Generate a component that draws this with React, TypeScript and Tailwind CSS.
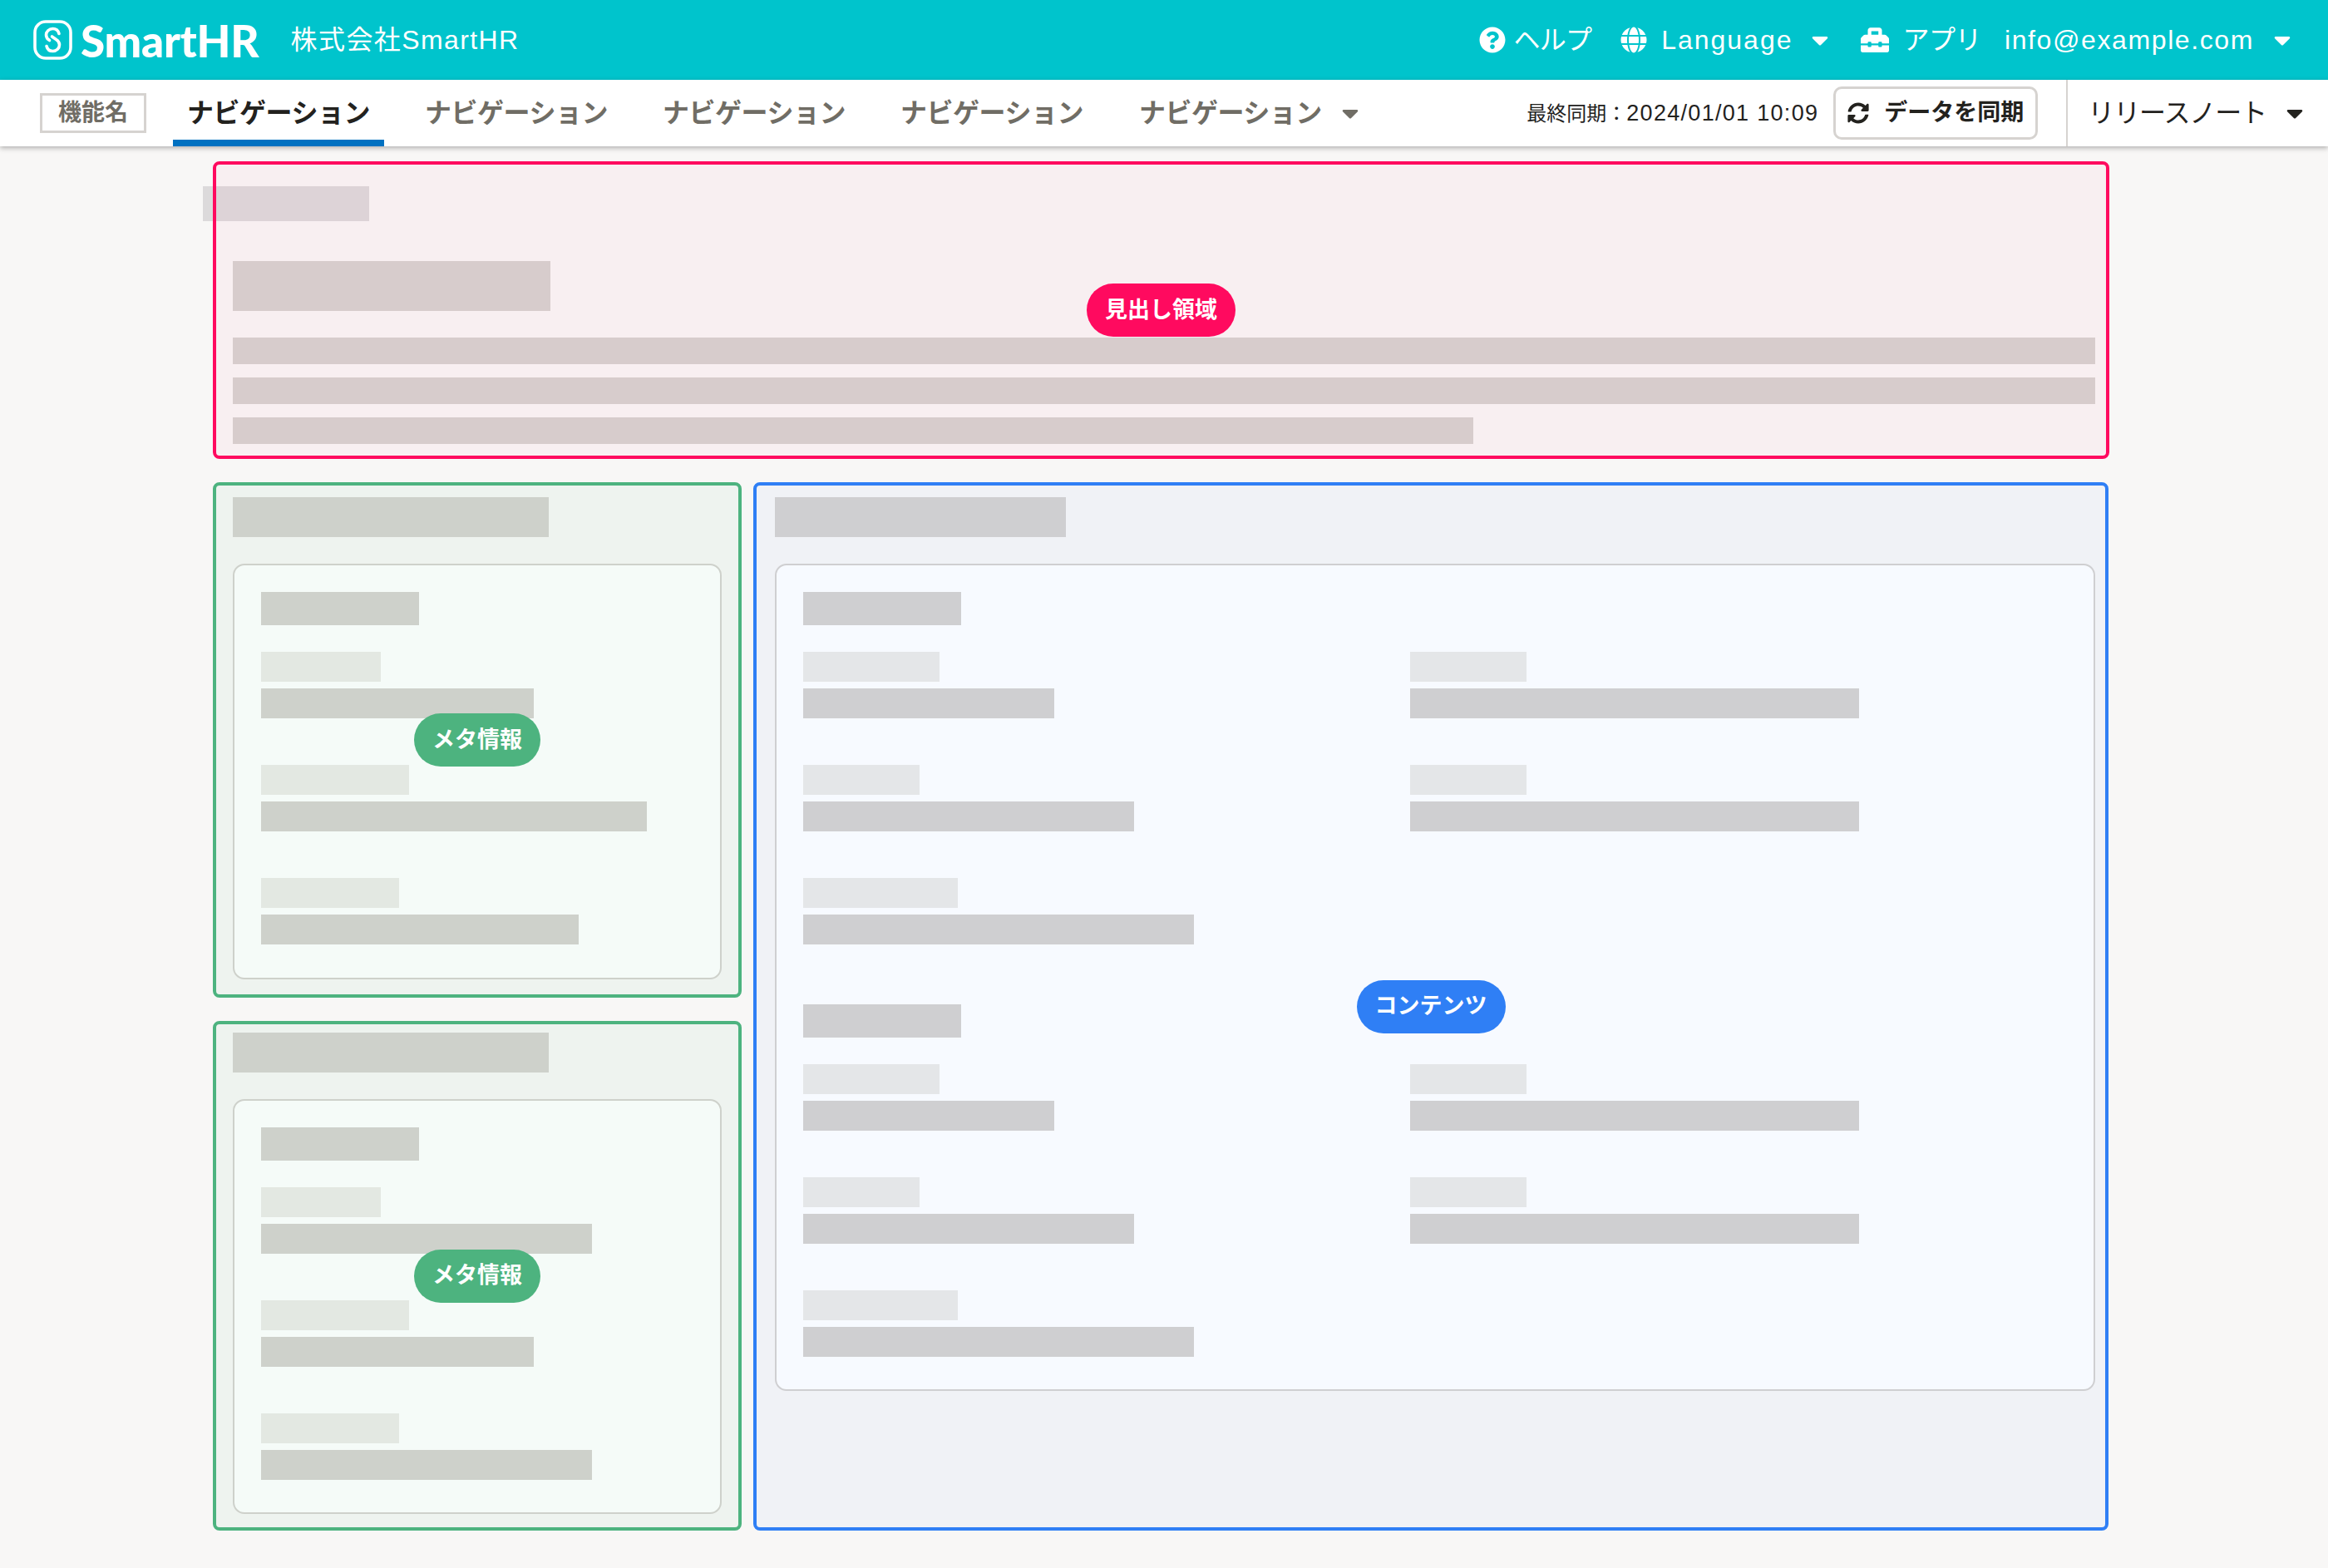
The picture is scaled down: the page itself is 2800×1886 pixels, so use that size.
import { FaCaretDown, FaGlobe, FaQuestionCircle, FaSyncAlt, FaToolbox } from "react-icons/fa";

const jp = { fontFamily: '"Liberation Sans", "Noto Sans CJK JP", sans-serif' };

const Bar = ({ w, h = 36, light = false }: { w: number; h?: number; light?: boolean }) => (
  <div className={light ? "bg-[#ecebe8]" : "bg-[#d6d3d0]"} style={{ width: w, height: h }} />
);

// label + value placeholder pair
const Field = ({ label, value }: { label: number; value: number }) => (
  <div className="flex flex-col gap-2">
    <Bar w={label} light />
    <Bar w={value} />
  </div>
);

const Overlay = ({ box, pill, text }: { box: string; pill: string; text: string }) => (
  <div className={`absolute inset-0 flex items-center justify-center rounded-lg border-4 ${box}`}>
    <span className={`flex h-16 items-center rounded-full px-[22px] text-[27px] font-bold text-white ${pill}`}>
      {text}
    </span>
  </div>
);

const Caret = ({ className }: { className: string }) => <FaCaretDown className={`h-8 w-5 shrink-0 ${className}`} />;

const Logo = () => (
  <svg viewBox="0 0 47 48" className="h-12 w-[47px] shrink-0" fill="none" stroke="white">
    <rect x="2" y="2" width="43" height="44" rx="13" strokeWidth="3.6" />
    <path d="M31 16.5C30 12.5 27 10.5 23.5 10.5 19 10.5 15.5 14 15.5 18 15.5 21 17 23 19.5 24.5" strokeWidth="3.6" strokeLinecap="round" />
    <path d="M16 31.5C17 35.5 20 37.5 23.5 37.5 28 37.5 31.5 34 31.5 30 31.5 27 30 25 27.5 23.5L22.5 20" strokeWidth="3.6" strokeLinecap="round" />
  </svg>
);

const MetaBox = ({
  top,
  bottom,
  height,
  rows,
}: {
  top: number;
  bottom: number;
  height: number;
  rows: [number, number][];
}) => (
  <section className="relative flex w-[636px] flex-col gap-8 px-6" style={{ paddingTop: top, paddingBottom: bottom }}>
    <Bar w={380} h={48} />
    <div
      className="flex flex-col gap-8 rounded-[14px] border-2 border-[#d6d3d0] bg-white pt-8 pl-8"
      style={{ height }}
    >
      <Bar w={190} h={40} />
      <div className="flex flex-col gap-14">
        {rows.map(([l, v], i) => (
          <Field key={i} label={l} value={v} />
        ))}
      </div>
    </div>
    <Overlay box="border-[#4db37f] bg-[#4db37f]/[0.055]" pill="bg-[#4db37f]" text="メタ情報" />
  </section>
);

const ContentGroup = ({ rows }: { rows: [number, number, number?, number?][] }) => (
  <div className="flex flex-col gap-8">
    <Bar w={190} h={40} />
    <div className="flex flex-col gap-14">
      {rows.map(([l, v, l2, v2], i) => (
        <div key={i} className="grid grid-cols-[730px_1fr]">
          <Field label={l} value={v} />
          {l2 && v2 ? <Field label={l2} value={v2} /> : null}
        </div>
      ))}
    </div>
  </div>
);

const groupRows: [number, number, number?, number?][] = [
  [164, 302, 140, 540],
  [140, 398, 140, 540],
  [186, 470],
];

export default function App() {
  return (
    <div className="min-h-[1886px] bg-[#f8f7f6]" style={jp}>
      {/* Header */}
      <header className="flex h-24 items-center bg-[#00c4cc] pr-[45px] pl-10 text-[32px] text-white">
        <Logo />
        <span className="ml-[10px] font-['Lato'] text-[53px] leading-none font-black tracking-[-0.2px]">SmartHR</span>
        <span className="ml-[38px] tracking-[1.4px]">株式会社SmartHR</span>
        <div className="ml-auto flex items-center">
          <FaQuestionCircle className="size-8" />
          <span className="ml-[10px] tracking-[-0.8px]">ヘルプ</span>
          <FaGlobe className="ml-[35px] size-8" />
          <span className="ml-[17px] tracking-[2px]">Language</span>
          <Caret className="ml-[22px]" />
          <FaToolbox className="ml-[39px] size-[34px]" />
          <span className="ml-[17px] tracking-[-0.5px]">アプリ</span>
          <span className="ml-7 tracking-[1.6px]">info@example.com</span>
          <Caret className="ml-6" />
        </div>
      </header>

      {/* Nav */}
      <nav className="relative z-10 flex h-20 items-center bg-white pl-12 shadow-[0_2px_6px_rgba(0,0,0,0.3)]">
        <span className="flex h-12 w-32 items-center justify-center border-[3px] border-[#d6d3d0] text-[28px] font-bold text-[#706d65]">
          機能名
        </span>
        <div className="ml-8 flex h-full gap-8">
          <a className="flex h-full w-[254px] items-center justify-center border-b-8 border-[#0071c1] pt-2 text-[32px] font-bold tracking-[-0.5px] text-[#23221e]">
            ナビゲーション
          </a>
          {["a", "b", "c"].map((k) => (
            <a key={k} className="flex h-full w-[254px] items-center justify-center text-[32px] font-bold tracking-[-0.5px] text-[#706d65]">
              ナビゲーション
            </a>
          ))}
          <a className="flex h-full items-center pl-[18px] text-[32px] font-bold tracking-[-0.5px] text-[#706d65]">
            ナビゲーション
            <Caret className="ml-6 text-[#706d65]" />
          </a>
        </div>
        <span className="ml-auto text-[24px] text-[#23221e]">
          最終同期：<span className="text-[27px] tracking-[1.3px]">2024/01/01 10:09</span>
        </span>
        <button className="ml-[18px] flex h-16 w-[246px] items-center justify-center gap-[18px] rounded-[10px] border-[3px] border-[#d6d3d0] text-[28px] font-bold text-[#23221e]">
          <FaSyncAlt className="size-[26px]" />
          データを同期
        </button>
        <div className="ml-[34px] flex h-full items-center border-l-2 border-[#d6d3d0] pr-[30px] pl-6 text-[32px] tracking-[-1.1px] text-[#23221e]">
          リリースノート
          <Caret className="ml-6 text-[#23221e]" />
        </div>
      </nav>

      {/* Main */}
      <main className="flex w-[2537px] flex-col gap-7 pt-[18px] pl-64">
        <section className="relative flex h-[358px] flex-col pt-[30px] pr-[17px] pl-6">
          <div className="-ml-9 h-[42px] w-[200px] bg-[#dcdadb]" />
          <div className="mt-12 h-[60px] w-[382px] bg-[#d6d3d0]" />
          <div className="mt-8 flex flex-col gap-4">
            <div className="h-8 bg-[#d6d3d0]" />
            <div className="h-8 bg-[#d6d3d0]" />
            <div className="h-8 w-[1492px] bg-[#d6d3d0]" />
          </div>
          <Overlay box="border-[#ff0a5f] bg-[#ff0a5f]/[0.03]" pill="bg-[#ff0a5f]" text="見出し領域" />
        </section>

        <div className="flex gap-[14px]">
          <div className="flex flex-col gap-7">
            <MetaBox
              top={18}
              bottom={22}
              height={500}
              rows={[
                [144, 328],
                [178, 464],
                [166, 382],
              ]}
            />
            <MetaBox
              top={14}
              bottom={20}
              height={499}
              rows={[
                [144, 398],
                [178, 328],
                [166, 398],
              ]}
            />
          </div>

          <section className="relative flex w-[1630px] flex-col gap-8 pt-[18px] pr-4 pl-[26px]">
            <Bar w={350} h={48} />
            <div className="flex h-[995px] flex-col gap-[72px] rounded-[14px] border-2 border-[#d6d3d0] bg-white pt-8 pl-8">
              <ContentGroup rows={groupRows} />
              <ContentGroup rows={groupRows} />
            </div>
            <Overlay box="border-[#2f7ff5] bg-[#2f7ff5]/[0.04]" pill="bg-[#2f7ff5]" text="コンテンツ" />
          </section>
        </div>
      </main>
    </div>
  );
}
